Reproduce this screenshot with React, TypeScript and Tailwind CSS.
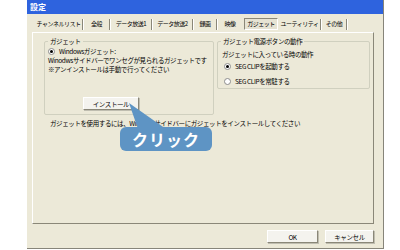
import React from 'react';

const font = { fontFamily: '"MS UI Gothic", "Noto Sans CJK JP", "Noto Sans", sans-serif' };

// tab widths picked to land the separators where the dialog has them
const tabs = [
  { label: 'チャンネルリスト', w: 'w-[47px]' },
  { label: '全般', w: 'w-[25px]' },
  { label: 'データ放送1', w: 'w-[40px]' },
  { label: 'データ放送2', w: 'w-[39px]' },
  { label: '録画', w: 'w-[22px]' },
  { label: '映像', w: 'w-[24px]' },
  { label: 'ガジェット', w: 'w-[34px]', active: true },
  { label: 'ユーティリティ', w: 'w-[41px]' },
  { label: 'その他', w: 'w-[24px]' },
];

const Sep = () => <span className="w-[1px] h-[11px] bg-[#8a8778] border-r border-white box-content" />;

const Radio = ({ checked, label }: { checked?: boolean; label: string }) => (
  <div className="flex items-center gap-[4px] h-[8px]">
    <span className="w-[7px] h-[7px] rounded-full border border-[#8c8c8c] bg-white flex items-center justify-center">
      {checked && <span className="w-[3px] h-[3px] rounded-full bg-black" />}
    </span>
    <span>{label}</span>
  </div>
);

const Button = ({ label, className }: { label: string; className: string }) => (
  <div
    className={`flex items-center justify-center bg-[#f4f3ee] border border-t-white border-l-white border-r-[#8a8778] border-b-[#8a8778] shadow-[1px_1px_0_#bfbdb0] ${className}`}
  >
    {label}
  </div>
);

const Group = ({ title, className, children }: { title: string; className: string; children: React.ReactNode }) => (
  <div className={`relative border border-[#d0d0bf] rounded-[2px] ${className}`}>
    <span className="absolute left-[3px] top-[-5px] px-[2px] bg-[#ece9d8] leading-[8px]">{title}</span>
    {children}
  </div>
);

export default function App() {
  return (
    <div
      className="relative w-[400px] h-[250px] bg-white overflow-hidden text-[6.5px] leading-[8px] tracking-[-0.4px] text-black whitespace-nowrap"
      style={font}
    >
      <div className="ml-[27px] w-[357px] h-[249px] bg-[#ece9d8] border-r border-b border-[#87857a] flex flex-col">
        {/* title bar */}
        <div className="h-[14px] bg-[#2e63de] flex items-center pl-[3px] text-white font-bold text-[8px] tracking-normal">設定</div>

        {/* tabs */}
        <div className="h-[18px] flex items-center pl-[8px] pt-[2px] text-[6px] tracking-[-0.5px]">
          {tabs.map((t, i) =>
            t.active ? (
              <span
                key={t.label}
                className={`${t.w} ml-[2px] mr-[1px] h-[12px] flex items-center justify-center border border-[#8a8778] border-r-white border-b-white bg-[#e6e3d3]`}
              >
                {t.label}
              </span>
            ) : (
              <React.Fragment key={t.label}>
                <span className={`${t.w} text-center`}>{t.label}</span>
                {tabs[i + 1]?.active ? null : <Sep />}
              </React.Fragment>
            )
          )}
        </div>

        {/* panel */}
        <div className="ml-[5px] w-[342px] h-[192px] border border-t-white border-l-white border-r-[#8a8778] border-b-[#8a8778]">
          <div className="flex gap-[3px] pl-[11px] pt-[8px]">
            <Group title="ガジェット" className="w-[170px] h-[74px] pl-[3px] pt-[5px]">
              <Radio checked label="Windowsガジェット:" />
              <div className="mt-[2px] leading-[7px]">Winodwsサイドバーでワンセグが見られるガジェットです</div>
              <div className="mt-[1px]">※アンインストールは手動で行ってください</div>
              <div className="pl-[35px] mt-[24px]">
                <Button label="インストール" className="w-[56px] h-[13px]" />
              </div>
            </Group>
            <Group title="ガジェット電源ボタンの動作" className="w-[153px] h-[48px] pl-[4px] pt-[8px]">
              <div>ガジェットに入っている時の動作</div>
              <div className="mt-[4px] pl-[2px]">
                <Radio checked label="SEG CLIPを起動する" />
              </div>
              <div className="mt-[7px] pl-[2px]">
                <Radio label="SEG CLIPを常駐する" />
              </div>
            </Group>
          </div>
          <div className="pl-[17px] mt-[4px]">ガジェットを使用するには、Windowsサイドバーにガジェットをインストールしてください</div>
        </div>

        {/* bottom buttons */}
        <div className="flex justify-end gap-[7px] pr-[9px] mt-[6px]">
          <Button label="OK" className="w-[51px] h-[13px]" />
          <Button label="キャンセル" className="w-[49px] h-[13px]" />
        </div>
      </div>

      {/* callout */}
      <svg className="absolute left-0 top-0" width="400" height="250">
        <polygon points="129,103 138,129 166,129" fill="#5e94c4" />
      </svg>
      <div className="absolute left-[120px] top-[127px] w-[92px] h-[24px] rounded-[6px] bg-[#5e94c4] flex items-center justify-center text-white font-bold text-[16px] tracking-[1px]">
        クリック
      </div>
    </div>
  );
}
